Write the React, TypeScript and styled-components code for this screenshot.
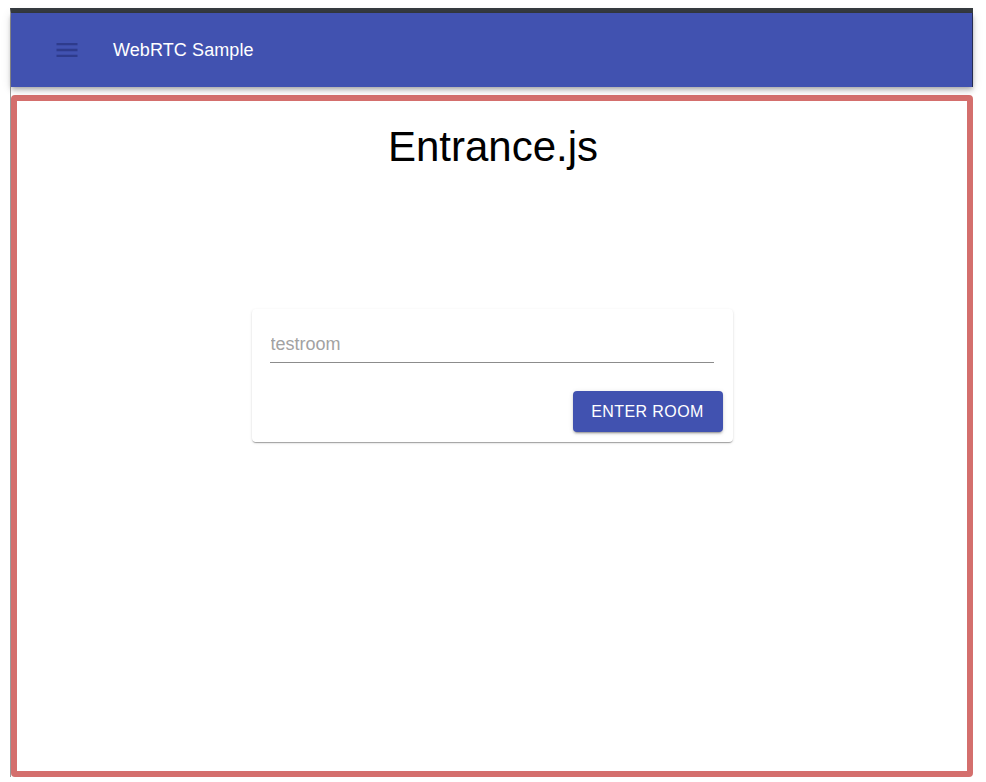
import React from 'react';
import styled, { createGlobalStyle } from 'styled-components';

const GlobalStyle = createGlobalStyle`
  html, body {
    margin: 0;
    padding: 0;
    background: #ffffff;
  }
  body {
    font-family: "Liberation Sans", Arial, Helvetica, sans-serif;
  }
`;

const App: React.FC = () => {
  return (
    <>
      <GlobalStyle />
      <Frame>
        <AppBar>
          <MenuButton aria-label="menu">
            <svg width="28" height="28" viewBox="0 0 24 24" fill="currentColor">
              <path d="M3 18h18v-2H3v2zm0-5h18v-2H3v2zm0-7v2h18V6H3z" />
            </svg>
          </MenuButton>
          <BarTitle>WebRTC Sample</BarTitle>
        </AppBar>
        <Main>
          <Title>Entrance.js</Title>
          <Card>
            <Field>
              <Input placeholder="testroom" />
            </Field>
            <Actions>
              <EnterButton>Enter Room</EnterButton>
            </Actions>
          </Card>
        </Main>
      </Frame>
    </>
  );
};

export default App;

const Frame = styled.div`
  margin: 8px 0 0 10px;
  width: 963px;
  box-sizing: border-box;
  border-left: 1px solid #9a9a9a;
  border-top: 5px solid #363b40;
  display: flex;
  flex-direction: column;
`;

const AppBar = styled.header`
  height: 74px;
  background: #4152b0;
  border-right: 1px solid #262c52;
  display: flex;
  align-items: center;
  padding-left: 42px;
  gap: 32px;
  box-shadow: 0 2px 4px -1px rgba(0, 0, 0, 0.2), 0 4px 5px 0 rgba(0, 0, 0, 0.14),
    0 1px 10px 0 rgba(0, 0, 0, 0.12);
  position: relative;
  z-index: 1;
`;

const MenuButton = styled.div`
  width: 28px;
  height: 28px;
  color: #2e3b8c;
  display: flex;
`;

const BarTitle = styled.div`
  color: #ffffff;
  font-size: 18px;
  letter-spacing: 0.1px;
  margin-top: 1px;
`;

const Main = styled.main`
  margin-top: 8px;
  height: 682px;
  box-sizing: border-box;
  border: 6px solid #d46f6d;
  border-radius: 4px;
  background: #ffffff;
  display: flex;
  flex-direction: column;
  align-items: center;
`;

const Title = styled.h1`
  margin: 23px 0 0 2px;
  font-size: 42px;
  line-height: 46px;
  font-weight: 400;
  color: #000000;
`;

const Card = styled.div`
  margin-top: 139px;
  width: 481px;
  box-sizing: border-box;
  padding: 18px 10px 10px 18px;
  border-radius: 4px;
  background: #ffffff;
  box-shadow: 0 2px 1px -1px rgba(0, 0, 0, 0.2), 0 1px 1px 0 rgba(0, 0, 0, 0.14),
    0 1px 3px 0 rgba(0, 0, 0, 0.12);
`;

const Field = styled.div`
  margin-right: 9px;
  border-bottom: 1px solid #8c8c8c;
`;

const Input = styled.input`
  display: block;
  width: 100%;
  height: 35px;
  box-sizing: border-box;
  border: none;
  outline: none;
  padding: 0 0 0 1px;
  font-family: "Liberation Sans", Arial, sans-serif;
  font-size: 18px;
  color: #222;
  background: transparent;

  &::placeholder {
    color: #a2a2a2;
  }
`;

const Actions = styled.div`
  display: flex;
  justify-content: flex-end;
  margin-top: 28px;
`;

const EnterButton = styled.button`
  width: 150px;
  height: 41px;
  border: none;
  border-radius: 4px;
  background: #4152b0;
  color: #ffffff;
  font-family: "Liberation Sans", Arial, sans-serif;
  font-size: 16px;
  letter-spacing: 0.4px;
  text-transform: uppercase;
  padding-top: 2px;
  cursor: pointer;
  box-shadow: 0 3px 1px -2px rgba(0, 0, 0, 0.2), 0 2px 2px 0 rgba(0, 0, 0, 0.14),
    0 1px 5px 0 rgba(0, 0, 0, 0.12);
`;
